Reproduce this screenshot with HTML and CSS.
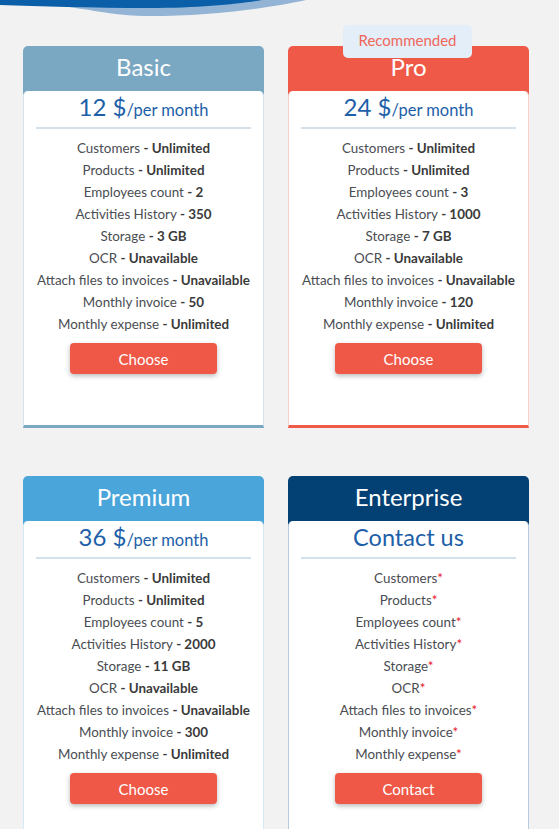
FILE: index.html
```html
<!DOCTYPE html>
<html>
<head>
<meta charset="utf-8">
<link rel="stylesheet" href="styles.css">
</head>
<body>
<svg class="wave" width="559" height="17" viewBox="0 0 559 17">
  <path d="M0 0 H306 C270 8 210 16 150 16 C115 16 95 10 60 6 Z" fill="#93b4d4"/>
  <path d="M0 0 H262 C240 4 200 8 150 8 C90 8 40 6 0 5 Z" fill="#0a5fa8"/>
</svg>
<main class="plans">
  <section class="card basic">
    <h2 class="card-title">Basic</h2>
    <div class="card-body">
      <div class="price"><span class="amount">12 $</span><span class="period">/per month</span></div>
      <ul class="features">
        <li>Customers <b>- Unlimited</b></li>
        <li>Products <b>- Unlimited</b></li>
        <li>Employees count <b>- 2</b></li>
        <li>Activities History <b>- 350</b></li>
        <li>Storage <b>- 3 GB</b></li>
        <li>OCR <b>- Unavailable</b></li>
        <li>Attach files to invoices <b>- Unavailable</b></li>
        <li>Monthly invoice <b>- 50</b></li>
        <li>Monthly expense <b>- Unlimited</b></li>
      </ul>
      <button class="btn">Choose</button>
    </div>
  </section>
  <section class="card pro">
    <div class="badge">Recommended</div>
    <h2 class="card-title">Pro</h2>
    <div class="card-body">
      <div class="price"><span class="amount">24 $</span><span class="period">/per month</span></div>
      <ul class="features">
        <li>Customers <b>- Unlimited</b></li>
        <li>Products <b>- Unlimited</b></li>
        <li>Employees count <b>- 3</b></li>
        <li>Activities History <b>- 1000</b></li>
        <li>Storage <b>- 7 GB</b></li>
        <li>OCR <b>- Unavailable</b></li>
        <li>Attach files to invoices <b>- Unavailable</b></li>
        <li>Monthly invoice <b>- 120</b></li>
        <li>Monthly expense <b>- Unlimited</b></li>
      </ul>
      <button class="btn">Choose</button>
    </div>
  </section>
  <section class="card premium">
    <h2 class="card-title">Premium</h2>
    <div class="card-body">
      <div class="price"><span class="amount">36 $</span><span class="period">/per month</span></div>
      <ul class="features">
        <li>Customers <b>- Unlimited</b></li>
        <li>Products <b>- Unlimited</b></li>
        <li>Employees count <b>- 5</b></li>
        <li>Activities History <b>- 2000</b></li>
        <li>Storage <b>- 11 GB</b></li>
        <li>OCR <b>- Unavailable</b></li>
        <li>Attach files to invoices <b>- Unavailable</b></li>
        <li>Monthly invoice <b>- 300</b></li>
        <li>Monthly expense <b>- Unlimited</b></li>
      </ul>
      <button class="btn">Choose</button>
    </div>
  </section>
  <section class="card enterprise">
    <h2 class="card-title">Enterprise</h2>
    <div class="card-body">
      <div class="price"><span class="contact">Contact us</span></div>
      <ul class="features">
        <li>Customers<i>*</i></li>
        <li>Products<i>*</i></li>
        <li>Employees count<i>*</i></li>
        <li>Activities History<i>*</i></li>
        <li>Storage<i>*</i></li>
        <li>OCR<i>*</i></li>
        <li>Attach files to invoices<i>*</i></li>
        <li>Monthly invoice<i>*</i></li>
        <li>Monthly expense<i>*</i></li>
      </ul>
      <button class="btn">Contact</button>
    </div>
  </section>
</main>
</body>
</html>
```
FILE: styles.css
```css
html, body {
  margin: 0;
  padding: 0;
  background: #f2f2f2;
  font-family: "Lato", "Open Sans", sans-serif;
  overflow: hidden;
}
.wave {
  display: block;
}
.plans {
  display: grid;
  grid-template-columns: 241px 241px;
  column-gap: 24px;
  row-gap: 48px;
  padding: 29px 0 0 23px;
}
.card {
  position: relative;
  border-radius: 5px 5px 0 0;
  display: flex;
  flex-direction: column;
}
.card-title {
  margin: 0;
  height: 45px;
  line-height: 42px;
  text-align: center;
  color: #fff;
  font-weight: 400;
  font-size: 24px;
}
.card-body {
  background: #fff;
  border-radius: 5px 5px 0 0;
  border-left: 1px solid #d8e4ec;
  border-right: 1px solid #d8e4ec;
  border-bottom: 3px solid transparent;
  padding: 0 12px 51px;
  display: flex;
  flex-direction: column;
  align-items: center;
}
.price {
  align-self: stretch;
  text-align: center;
  color: #1d5fa8;
  height: 36px;
  line-height: 32px;
  border-bottom: 2px solid #d3e1ec;
  margin-bottom: 8px;
}
.amount {
  font-size: 24px;
}
.period {
  font-size: 16.5px;
}
.contact {
  font-size: 23.5px;
}
.features {
  list-style: none;
  margin: 0;
  padding: 0;
  text-align: center;
  font-size: 13.4px;
  line-height: 22px;
  color: #4a4d52;
}
.features b {
  color: #3a3a3a;
  font-weight: 700;
}
.features i {
  font-style: normal;
  color: #e8202e;
}
.btn {
  margin-top: 8px;
  width: 147px;
  height: 31px;
  border: none;
  border-radius: 4px;
  background: #ef5847;
  color: #fff;
  font-family: inherit;
  font-size: 15px;
  box-shadow: 0 2px 5px rgba(0, 0, 0, 0.28);
}
.badge {
  position: absolute;
  left: 55px;
  top: -21px;
  width: 129px;
  height: 33px;
  line-height: 31px;
  text-align: center;
  background: #e3eef9;
  color: #f0675a;
  font-size: 15px;
  border-radius: 5px;
}
.basic { background: #7aa7c2; }
.basic .card-body { border-bottom-color: #7aa7c2; border-left-color: #d5e3ec; border-right-color: #d5e3ec; }
.pro { background: #ef5a48; }
.pro .card-body { border-bottom-color: #ef5a48; border-left-color: #f9cfc9; border-right-color: #f9cfc9; }
.premium { background: #4aa5da; }
.premium .card-body { border-bottom-color: #4aa5da; border-left-color: #d6e8f4; border-right-color: #d6e8f4; }
.enterprise { background: #034073; }
.enterprise .card-body { border-bottom-color: #034073; border-left-color: #b8cadd; border-right-color: #b8cadd; }
```
